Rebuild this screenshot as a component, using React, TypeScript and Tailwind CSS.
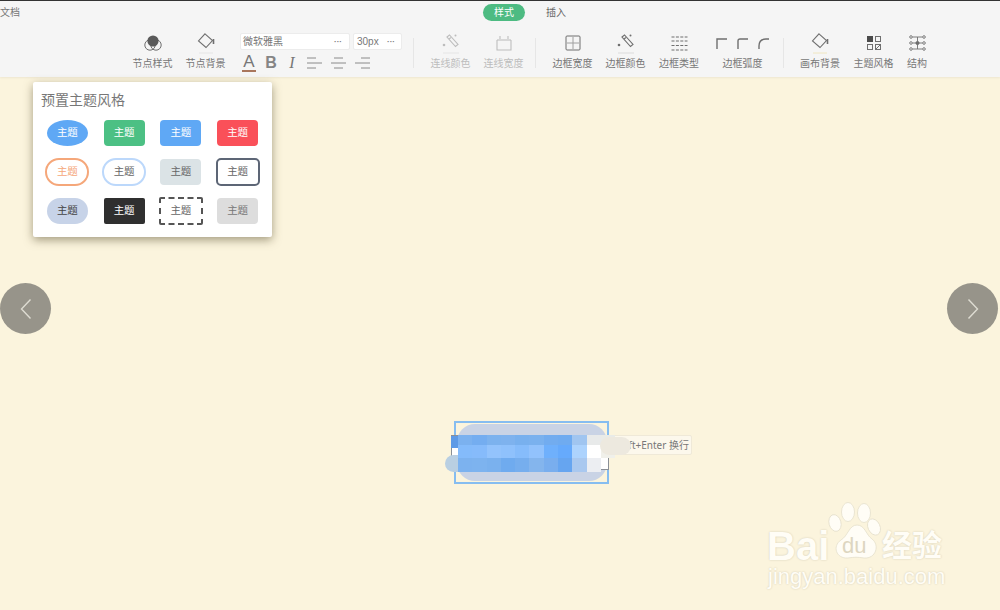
import React from 'react';

const cn = "font-['Liberation_Sans','Noto_Sans_CJK_SC',sans-serif]";

const gray = '#6f6f6f';
const faded = '#bdbdbd';

function StyleIcon() {
  return (
    <svg width="20" height="20" viewBox="0 0 20 20" fill="none" stroke={gray}>
      <circle cx="7" cy="12" r="5.2" />
      <circle cx="13" cy="12" r="5.2" />
      <circle cx="10" cy="8" r="5.6" fill="#5a5a5a" stroke="none" />
    </svg>
  );
}

function BucketIcon({ line }: { line: string }) {
  return (
    <svg width="20" height="21" viewBox="0 0 20 21" fill="none" stroke={gray} strokeWidth="1.1">
      <path d="M9 0.8 L16.5 7.5 L10 14.5 L2.5 8 Z" />
      <path d="M17.5 6 V11" strokeWidth="1.6" />
      <path d="M3 20 H17" stroke={line} strokeWidth="1" />
    </svg>
  );
}

function PenIcon({ color, line }: { color: string; line: string }) {
  return (
    <svg width="20" height="21" viewBox="0 0 20 21" fill="none" stroke={color} strokeWidth="1.1">
      <path d="M6 4 L8.5 2 L17 11.5 L14.5 13.5 Z" />
      <path d="M8 6 L10 4.5" />
      <circle cx="14.5" cy="2.5" r="1" fill={color} stroke="none" />
      <circle cx="3" cy="12" r="1.3" fill={color} stroke="none" />
      <path d="M2 20 H18" stroke={line} />
    </svg>
  );
}

function LineWidthIcon() {
  return (
    <svg width="18" height="18" viewBox="0 0 18 18" fill="none" stroke={faded} strokeWidth="1.1">
      <path d="M2 6 V16 H16 V6" />
      <path d="M2 6 H16" />
      <path d="M5 2 V5 M13 2 V5" />
    </svg>
  );
}

function BorderWidthIcon() {
  return (
    <svg width="16" height="16" viewBox="0 0 16 16" fill="none" stroke={gray} strokeWidth="1">
      <rect x="1" y="1" width="14" height="14" rx="1" />
      <path d="M8 2 V14 M2 8 H14" stroke="#a0a0a0" />
    </svg>
  );
}

function BorderTypeIcon() {
  return (
    <svg width="17" height="15" viewBox="0 0 17 15" stroke={gray} strokeWidth="1.2" strokeDasharray="3 1.4">
      <path d="M0.5 1 H16.5 M0.5 5 H16.5 M0.5 9.5 H16.5 M0.5 14 H16.5" />
    </svg>
  );
}

function CornerIcon({ d }: { d: string }) {
  return (
    <svg width="11" height="11" viewBox="0 0 11 11" fill="none" stroke={gray} strokeWidth="1.4">
      <path d={d} />
    </svg>
  );
}

function ThemeIcon() {
  return (
    <svg width="16" height="16" viewBox="0 0 16 16" fill="none" stroke={gray} strokeWidth="1">
      <rect x="1" y="1" width="6" height="6" fill="#4a4a4a" stroke="none" />
      <rect x="9.5" y="1.5" width="5" height="5" />
      <rect x="1.5" y="9.5" width="5" height="5" />
      <rect x="9.5" y="9.5" width="5" height="5" />
      <path d="M10 14 L14 10" />
    </svg>
  );
}

function StructureIcon() {
  return (
    <svg width="17" height="16" viewBox="0 0 17 16" fill="none" stroke={gray} strokeWidth="0.9">
      <circle cx="2" cy="2" r="1.3" />
      <circle cx="15" cy="2" r="1.3" />
      <circle cx="2" cy="8" r="1.3" />
      <circle cx="15" cy="8" r="1.3" />
      <circle cx="2" cy="14" r="1.3" />
      <circle cx="15" cy="14" r="1.3" />
      <circle cx="8.5" cy="8" r="1.6" fill="#4a4a4a" />
      <path d="M3.5 2 H13.5 M3.5 8 H13.5 M3.5 14 H13.5 M8.5 2 V14" />
    </svg>
  );
}

function ToolItem({
  label,
  icon,
  width = 'w-[39px]',
  muted = false,
}: {
  label: string;
  icon: React.ReactNode;
  width?: string;
  muted?: boolean;
}) {
  return (
    <div className={`flex flex-col items-center ${width}`}>
      <div className="flex h-[20px] items-center justify-center">{icon}</div>
      <span className={`mt-[4px] whitespace-nowrap text-[10px] leading-[14px] ${muted ? 'text-[#bdbdbd]' : 'text-[#777]'}`}>
        {label}
      </span>
    </div>
  );
}

function Divider() {
  return <div className="mt-[5px] h-[30px] w-px bg-[#e6e6e6]" />;
}

function AlignIcon({ rows }: { rows: string }) {
  return (
    <svg width="15" height="14" viewBox="0 0 15 14" fill="none" stroke="#8a8a8a" strokeWidth="1">
      <path d={rows} />
    </svg>
  );
}

function FontControls() {
  return (
    <div className="flex w-[162px] flex-col">
      <div className="flex gap-[3px]">
        <div className="flex h-[17px] w-[110px] items-center justify-between rounded-[2px] border border-[#ececec] bg-white pl-[2px] pr-[7px] text-[10px] text-[#777]">
          <span>微软雅黑</span>
          <span className="text-[8px] font-bold leading-none">···</span>
        </div>
        <div className="flex h-[17px] w-[49px] items-center justify-between rounded-[2px] border border-[#ececec] bg-white pl-[3px] pr-[6px] text-[10px] text-[#777]">
          <span>30px</span>
          <span className="text-[8px] font-bold leading-none">···</span>
        </div>
      </div>
      <div className="mt-[4px] flex h-[18px] items-center text-[#777]">
        <span className="ml-[2px] w-[14px] border-b-2 border-[#a9765c] text-center text-[17px] leading-[16px]">A</span>
        <span className="ml-[9px] w-[12px] text-center text-[16px] font-bold leading-none text-[#858585]">B</span>
        <span className="ml-[10px] w-[10px] text-center font-['Liberation_Serif',serif] text-[16px] italic leading-none">I</span>
        <span className="ml-[10px] flex"><AlignIcon rows="M0 2 H9 M0 7 H15 M0 12 H9" /></span>
        <span className="ml-[9px] flex"><AlignIcon rows="M3 2 H12 M0 7 H15 M3 12 H12" /></span>
        <span className="ml-[9px] flex"><AlignIcon rows="M6 2 H15 M0 7 H15 M6 12 H15" /></span>
      </div>
    </div>
  );
}

function Toolbar() {
  return (
    <header className="h-[77px] shrink-0 border-t border-[#333] bg-[#f5f5f5] shadow-[0_1px_2px_rgba(0,0,0,0.06)]">
      <div className="relative flex h-[32px] items-start justify-center">
        <span className="absolute left-0 top-[5px] text-[10px] leading-[14px] text-[#777]">文档</span>
        <div className="ml-[49px] mt-[3px] flex items-center">
          <span className="flex h-[17px] w-[42px] items-center justify-center rounded-full bg-[#4dbb82] text-[10px] text-white">样式</span>
          <span className="ml-[21px] text-[10px] text-[#666]">插入</span>
        </div>
      </div>
      <div className="flex items-start pl-[133px]">
        <ToolItem label="节点样式" icon={<StyleIcon />} />
        <ToolItem label="节点背景" icon={<BucketIcon line="#e5e5e5" />} width="ml-[14px] w-[39px]" />
        <div className="ml-[15px]"><FontControls /></div>
        <div className="ml-[11px]"><Divider /></div>
        <ToolItem label="连线颜色" icon={<PenIcon color={faded} line="#e5e5e5" />} width="ml-[17px] w-[39px]" muted />
        <ToolItem label="连线宽度" icon={<LineWidthIcon />} width="ml-[14px] w-[39px]" muted />
        <div className="ml-[12px]"><Divider /></div>
        <ToolItem label="边框宽度" icon={<BorderWidthIcon />} width="ml-[17px] w-[39px]" />
        <ToolItem label="边框颜色" icon={<PenIcon color={gray} line="#dcdcdc" />} width="ml-[14px] w-[39px]" />
        <ToolItem label="边框类型" icon={<BorderTypeIcon />} width="ml-[14px] w-[40px]" />
        <ToolItem
          label="边框弧度"
          width="ml-[18px] w-[51px]"
          icon={
            <div className="flex gap-[10px]">
              <CornerIcon d="M1 11 V1 H11" />
              <CornerIcon d="M1 11 V3 Q1 1 3 1 H11" />
              <CornerIcon d="M1 11 V8 Q1 1 8 1 H11" />
            </div>
          }
        />
        <div className="ml-[15px]"><Divider /></div>
        <ToolItem label="画布背景" icon={<BucketIcon line="#f0e6c0" />} width="ml-[16px] w-[40px]" />
        <ToolItem label="主题风格" icon={<ThemeIcon />} width="ml-[14px] w-[39px]" />
        <ToolItem label="结构" icon={<StructureIcon />} width="ml-[14px] w-[20px]" />
      </div>
    </header>
  );
}

const themes = [
  'w-[41px] h-[26px] rounded-[50%] bg-[#5fa8f5] text-white',
  'w-[41px] h-[26px] rounded-[4px] bg-[#4cc084] text-white',
  'w-[41px] h-[26px] rounded-[4px] bg-[#5fa8f5] text-white',
  'w-[41px] h-[26px] rounded-[4px] bg-[#fa5059] text-white',
  'w-[44px] h-[28px] rounded-[14px] border-2 border-[#f5a77a] bg-white text-[#f5a77a]',
  'w-[44px] h-[28px] rounded-[14px] border-2 border-[#bcd8fb] bg-white text-[#666]',
  'w-[41px] h-[26px] rounded-[4px] bg-[#dbe3e6] text-[#666]',
  'w-[44px] h-[28px] rounded-[5px] border-2 border-[#5d6676] bg-white text-[#666]',
  'w-[41px] h-[26px] rounded-[13px] bg-[#c7d3e8] text-[#444]',
  'w-[41px] h-[26px] rounded-[2px] bg-[#2f2f2f] text-white',
  'w-[44px] h-[28px] rounded-[2px] border-2 border-dashed border-[#555] bg-white text-[#666]',
  'w-[41px] h-[26px] rounded-[4px] bg-[#dddddd] text-[#777]',
];

function ThemePopup() {
  return (
    <div className="absolute left-[33px] top-[5px] h-[155px] w-[239px] rounded-[2px] bg-white px-[8px] shadow-[0_3px_10px_rgba(90,80,50,0.55)]">
      <div className="pt-[8px] text-[14px] leading-[20px] text-[#777]">预置主题风格</div>
      <div className="ml-[-2px] mt-[3px] grid w-[227px] grid-cols-4 grid-rows-[39px_39px_39px]">
        {themes.map((t, i) => (
          <div key={i} className="flex items-center justify-center">
            <div className={`flex items-center justify-center text-[10.5px] ${t}`}>主题</div>
          </div>
        ))}
      </div>
    </div>
  );
}

function NavButton({ dir }: { dir: 'left' | 'right' }) {
  return (
    <div
      className={`absolute top-[206px] flex h-[51px] w-[51px] items-center justify-center rounded-full bg-[#97948a] ${
        dir === 'left' ? 'left-0' : 'right-[2px]'
      }`}
    >
      <svg width="14" height="22" viewBox="0 0 14 22" fill="none" stroke="#dedcd2" strokeWidth="1.4">
        <path d={dir === 'left' ? 'M11.5 1.5 L2.5 11 L11.5 20.5' : 'M2.5 1.5 L11.5 11 L2.5 20.5'} />
      </svg>
    </div>
  );
}

const mosaic = [
  ['bg-[#7bb1ef]', 'bg-[#74adf0]', 'bg-[#7cb2ee]', 'bg-[#7eb2ee]', 'bg-[#78b0ee]', 'bg-[#7ab1ee]', 'bg-[#72acef]', 'bg-[#6fabf0]', 'bg-[#a0c5f0]', 'bg-[#e8eaea]', 'bg-[#e9ebe7]'],
  ['bg-[#84bbfb]', 'bg-[#86bbfb]', 'bg-[#93c3fc]', 'bg-[#8fc1fc]', 'bg-[#86bcfb]', 'bg-[#92c2fc]', 'bg-[#6fb0fc]', 'bg-[#66aafc]', 'bg-[#add3fd]', 'bg-white', 'bg-[#f0f0ea]'],
  ['bg-[#7cb2ef]', 'bg-[#7db3ef]', 'bg-[#7ab1ee]', 'bg-[#6fabef]', 'bg-[#76aeee]', 'bg-[#84b5ed]', 'bg-[#79aeee]', 'bg-[#66a5f0]', 'bg-[#a9c8ef]', 'bg-[#eceef2]'],
];

function CanvasNode() {
  return (
    <>
      <div className="absolute left-[612px] top-[358px] flex h-[20px] w-[80px] items-center justify-end rounded-[2px] border border-[#efe9d8] bg-[#fcf8ec] pr-[2px] font-['Noto_Sans','Noto_Sans_CJK_SC',sans-serif] text-[10px] text-[#777]">
        <span className="whitespace-nowrap">Shift+Enter 换行</span>
      </div>
      <div className="absolute left-[454px] top-[344px] h-[63px] w-[155px] border-2 border-[#86bdf0]">
        <div className="ml-[1px] mt-[1px] h-[57px] w-[150px] rounded-[18px] bg-[#c9d3e5]" />
      </div>
      <div className="absolute left-[451px] top-[358px] h-[35px] w-[158px] border border-[#8a8f96] bg-white" />
      <div className="absolute left-[451px] top-[359px] h-[12px] w-[8px] bg-[#5d9ae6]" />
      <div className="absolute left-[445px] top-[378px] h-[17px] w-[24px] rounded-full bg-[#b9cfe2]" />
      <div className="absolute left-[458px] top-[358px] flex flex-col">
        {mosaic.map((row, r) => (
          <div key={r} className={`flex ${r === 0 ? 'h-[10px]' : r === 1 ? 'h-[13px]' : 'h-[14px]'}`}>
            {row.map((c, i) => (
              <div key={i} className={`w-[14.3px] ${c}`} />
            ))}
          </div>
        ))}
      </div>
      <div className="absolute left-[600px] top-[360px] h-[18px] w-[31px] rounded-[9px] bg-[#ede9df]" />
    </>
  );
}

function Watermark() {
  const glow = '[text-shadow:0_0_2px_#cfc8b2]';
  return (
    <div className="absolute left-[766px] top-[422px] h-[170px] w-[185px] text-[#fffdf6]">
      <span className={`absolute left-[1px] top-[24px] font-['Liberation_Sans',sans-serif] text-[40px] font-bold leading-[46px] ${glow}`}>Bai</span>
      <svg className="absolute left-[60px] top-[0px]" width="62" height="66" viewBox="0 0 62 66" fill="#fffdf6" stroke="#e5dfcb" strokeWidth="0.8">
        <ellipse cx="22" cy="13" rx="6.5" ry="9.5" />
        <ellipse cx="38" cy="14" rx="6.5" ry="9.5" />
        <ellipse cx="9" cy="24" rx="6" ry="8.5" transform="rotate(-15 9 24)" />
        <ellipse cx="48" cy="28" rx="6" ry="8.5" transform="rotate(-25 48 28)" />
        <path d="M31 26 C39 26 40 36 46 40 C54 46 50 60 38 59 C32 58 28 58 22 59 C10 60 6 47 15 41 C22 37 23 26 31 26 Z" />
      </svg>
      <span className="absolute left-[76px] top-[34px] font-['Liberation_Sans',sans-serif] text-[22px] leading-[26px] text-[#ddd6c0]">du</span>
      <span className={`absolute left-[116px] top-[23px] font-['Noto_Sans_CJK_SC',sans-serif] text-[30px] font-bold leading-[42px] ${glow}`}>经验</span>
      <span className={`absolute left-[2px] top-[65px] whitespace-nowrap font-['Liberation_Sans',sans-serif] text-[22px] leading-[26px] ${glow}`}>jingyan.baidu.com</span>
    </div>
  );
}

export default function App() {
  return (
    <div className={`flex h-[610px] w-[1000px] flex-col overflow-hidden bg-[#fbf4dd] ${cn}`}>
      <Toolbar />
      <main className="relative flex-1">
        <ThemePopup />
        <NavButton dir="left" />
        <NavButton dir="right" />
        <CanvasNode />
        <Watermark />
      </main>
    </div>
  );
}
